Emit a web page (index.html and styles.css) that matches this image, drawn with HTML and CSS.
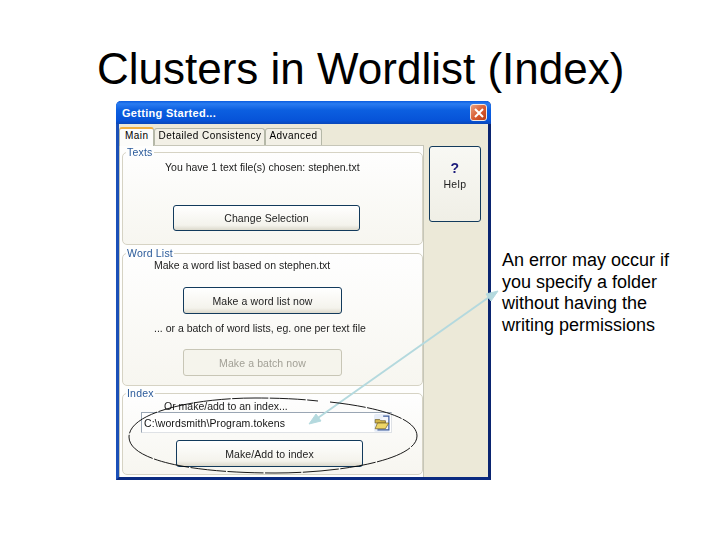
FILE: index.html
```html
<!DOCTYPE html>
<html lang="en">
<head>
<meta charset="utf-8">
<title>Clusters in Wordlist (Index)</title>
<link rel="stylesheet" href="styles.css">
</head>
<body>
<main class="slide">
  <h1 class="slide-title">Clusters in Wordlist (Index)</h1>
  <div class="stage">
    <section class="window">
      <header class="titlebar">
        <span class="titlebar-text">Getting Started...</span>
        <span class="close-btn">
          <svg viewBox="0 0 12 12" width="12" height="12"><path d="M2 2 L10 10 M10 2 L2 10" stroke="#fff" stroke-width="2" fill="none"/></svg>
        </span>
      </header>
      <div class="client">
        <div class="main-col">
          <nav class="tabs">
            <span class="tab tab-active">Main</span>
            <span class="tab">Detailed Consistency</span>
            <span class="tab">Advanced</span>
          </nav>
          <div class="tab-panel">
            <fieldset class="group group-texts">
              <legend>Texts</legend>
              <p class="line line-texts">You have 1 text file(s) chosen: stephen.txt</p>
              <button class="btn btn-change">Change Selection</button>
            </fieldset>
            <fieldset class="group group-words">
              <legend>Word List</legend>
              <p class="line line-words">Make a word list based on stephen.txt</p>
              <button class="btn btn-word">Make a word list now</button>
              <p class="line line-batch">... or a batch of word lists, eg. one per text file</p>
              <button class="btn btn-word btn-disabled">Make a batch now</button>
            </fieldset>
            <fieldset class="group group-index">
              <legend>Index</legend>
              <p class="line line-index">Or make/add to an index...</p>
              <div class="path-field">
                <span class="path-text">C:\wordsmith\Program.tokens</span>
                <span class="folder-btn">
                  <svg viewBox="0 0 14 14" width="16" height="16">
                    <path d="M8 1 L13 1 L13 13 L3 13" fill="#f4f6fb" stroke="#3a5a9c" stroke-width="1"/>
                    <path d="M1 4 L5 4 L6 5 L10 5 L10 7 L1 7 Z" fill="#d6b84a" stroke="#6b5a20" stroke-width=".6"/>
                    <path d="M1 12 L3 7 L13 7 L10 12 Z" fill="#eed667" stroke="#6b5a20" stroke-width=".6"/>
                  </svg>
                </span>
              </div>
              <button class="btn btn-index">Make/Add to index</button>
            </fieldset>
          </div>
        </div>
        <aside class="side-col">
          <button class="help-btn"><span class="help-mark">?</span><span>Help</span></button>
        </aside>
      </div>
    </section>
    <p class="note">An error may occur if you specify a folder without having the writing permissions</p>
  </div>
  <svg class="annotations" viewBox="0 0 720 540" width="720" height="540">
    <g stroke="#b4d9de" stroke-width="2" fill="#b4d9de">
      <path d="M315 420 L492 295" fill="none"/>
      <path d="M498 291 L486 294 L491 301 Z" stroke-width="1"/>
      <path d="M309 424 L321 421 L316 414 Z" stroke-width="1"/>
    </g>
    <path d="M330 402 C385 408 417 420 417 436 C417 460 340 473 275 473 C190 473 129 460 129 437 C129 412 195 398 255 398 C280 398 300 399 318 401" fill="none" stroke="#000" stroke-width=".9" stroke-dasharray="36 1.5"/>
  </svg>
</main>
</body>
</html>
```
FILE: styles.css
```css
* { box-sizing: border-box; }
html, body { margin: 0; padding: 0; background: #fff; }
.slide {
  position: relative;
  width: 720px;
  height: 540px;
  overflow: hidden;
  font-family: "Liberation Sans", Arial, sans-serif;
  color: #000;
}
.slide-title {
  margin: 0;
  padding: 44px 0 0 97px;
  height: 101px;
  font-size: 44px;
  line-height: 50px;
  font-weight: 400;
  white-space: nowrap;
}
.stage { display: flex; align-items: flex-start; gap: 11px; margin-left: 116px; }
.note {
  margin: 149px 0 0;
  width: 190px;
  font-size: 18px;
  line-height: 21.6px;
}
.window {
  width: 375px;
  height: 379px;
  flex: none;
  display: flex;
  flex-direction: column;
  background: #ece9d8;
  border: solid #1a50b8;
  border-width: 0 3px 3px 3px;
  border-bottom-color: #0a2a80;
  border-right-color: #0a2470;
  border-radius: 5px 5px 0 0;
}
.titlebar {
  height: 23px;
  margin: 0 -3px;
  flex: none;
  display: flex;
  align-items: center;
  justify-content: space-between;
  padding: 0 4px 0 6px;
  background: linear-gradient(#0a5ce0 0%, #2a7cf0 12%, #0c5fe0 40%, #0653d8 85%, #0a47b8 100%);
  border-radius: 5px 5px 0 0;
}
.titlebar-text {
  color: #fff;
  font-weight: 700;
  font-size: 11px;
  letter-spacing: .3px;
}
.close-btn {
  width: 17px;
  height: 17px;
  display: flex;
  align-items: center;
  justify-content: center;
  background: linear-gradient(135deg, #e8a080, #d85a30 55%, #b83c14);
  border: 1px solid #f4e8e0;
  border-radius: 3px;
}
.client { flex: 1; display: flex; min-height: 0; filter: blur(.3px); }
.main-col { width: 305px; flex: none; padding-top: 3px; display: flex; flex-direction: column; }
.tabs { display: flex; height: 18px; flex: none; align-items: flex-end; }
.tab {
  height: 17px;
  padding: 0 3px;
  font-size: 10px;
  line-height: 14px;
  letter-spacing: .45px;
  background: #f2f0e6;
  border: 1px solid #b5b8a8;
  border-bottom: 0;
  border-radius: 3px 3px 0 0;
  white-space: nowrap;
}
.tab-active {
  height: 19px;
  padding: 0 5px;
  background: #fcfcfa;
  border-top: 2px solid #f0b040;
  position: relative;
  top: 1px;
}
.tab-panel {
  flex: 1;
  background: #fefefd;
  border: solid #c6c6b8;
  border-width: 1px 1px 0 1px;
  padding: 0 0 0 2px;
  display: flex;
  flex-direction: column;
}
.group {
  margin: 0;
  padding: 0;
  width: 301px;
  border: 1px solid #d6d3c4;
  border-radius: 5px;
  min-inline-size: 0;
  background: linear-gradient(#fefefe, #f7f6f0);
}
.group legend {
  margin-left: 3px;
  padding: 0 1px;
  font-size: 10.5px;
  line-height: 12px;
  color: #2a5a9a;
  letter-spacing: .2px;
}
.group-texts { height: 99px; }
.group-words { height: 139px; margin-top: 2px; }
.group-index { height: 88px; margin-top: 1px; }
.line {
  margin: 0;
  font-size: 10.5px;
  line-height: 13px;
  white-space: nowrap;
  color: #222;
}
.line-texts { margin: 3px 0 0 42px; }
.line-words { margin: 0 0 0 31px; }
.line-batch { margin: 8px 0 0 31px; }
.line-index { margin: 2px 0 0 41px; line-height: 11px; }
.btn {
  display: block;
  padding: 0;
  font: 10.5px "Liberation Sans", Arial, sans-serif;
  letter-spacing: .1px;
  color: #222;
  background: linear-gradient(#fff, #f4f3ec 80%, #dcd9cc);
  border: 1px solid #123a5c;
  border-radius: 3px;
}
.btn-change { width: 187px; height: 26px; margin: 31px 0 0 50px; }
.btn-word { width: 159px; height: 27px; margin: 15px 0 0 60px; }
.btn-disabled { margin-top: 14px; color: #a2a096; border-color: #c8c6b6; background: #f5f4ec; }
.btn-index { width: 187px; height: 27px; margin: 7px 0 0 53px; }
.path-field {
  width: 251px;
  height: 21px;
  margin: 0 0 0 18px;
  background: #fff;
  border: 1px solid #9aa6b4;
  border-right-color: #dfe2e6;
  border-bottom-color: #dfe2e6;
  display: flex;
  align-items: center;
  justify-content: space-between;
  padding: 0 0 0 2px;
}
.path-text { font-size: 10.5px; letter-spacing: .1px; color: #111; }
.folder-btn {
  width: 16px;
  height: 18px;
  margin-right: 1px;
  display: flex;
  align-items: center;
  justify-content: center;
  background: #e8eef8;
  border-radius: 2px;
}
.side-col { flex: 1; padding: 22px 0 0 5px; }
.help-btn {
  width: 52px;
  height: 76px;
  display: flex;
  flex-direction: column;
  align-items: center;
  padding: 14px 0 0;
  font: 10.5px "Liberation Sans", Arial, sans-serif;
  letter-spacing: .4px;
  color: #222;
  background: linear-gradient(#f8f8f4, #f0efe6);
  border: 1px solid #123a5c;
  border-radius: 3px;
}
.help-mark { font-size: 14px; font-weight: 700; line-height: 15px; color: #1a1a7a; margin-bottom: 2px; }
.annotations { position: absolute; left: 0; top: 0; pointer-events: none; }
```
